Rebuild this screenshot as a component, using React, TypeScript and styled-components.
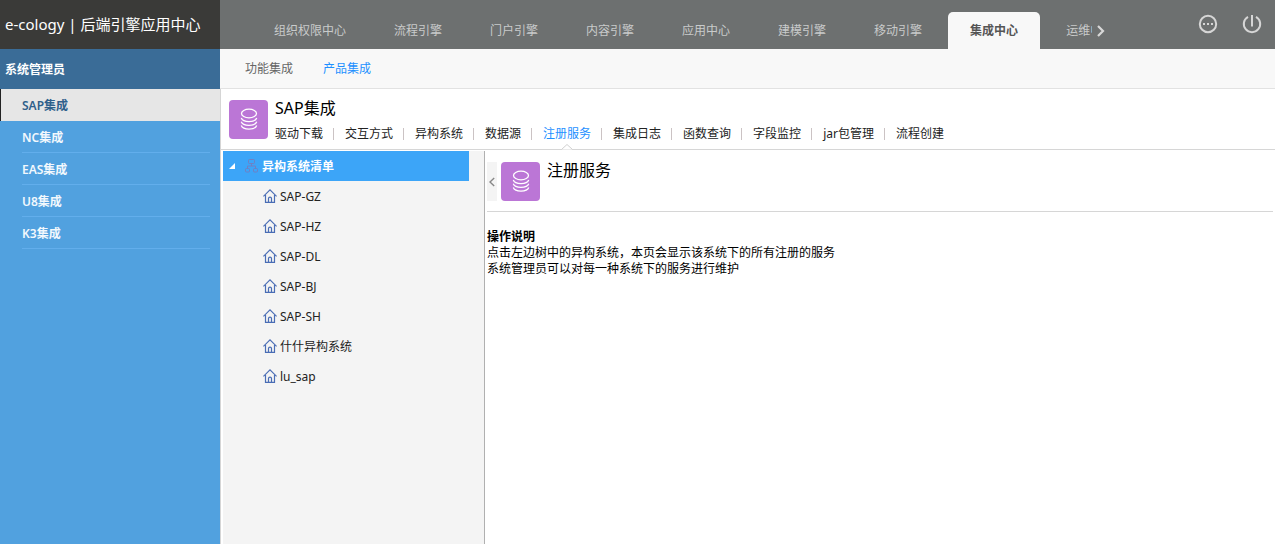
import React, { useState } from "react";
import styled, { createGlobalStyle, css } from "styled-components";

const GlobalStyle = createGlobalStyle`
  * { box-sizing: border-box; }
  body {
    margin: 0;
    background: #fff;
    color: #000;
    font: 12px/16px "Noto Sans", "Noto Sans CJK SC", sans-serif;
  }
  button {
    margin: 0;
    padding: 0;
    border: 0;
    background: none;
    color: inherit;
    font: inherit;
    cursor: pointer;
  }
  a { color: inherit; text-decoration: none; }
  ul { margin: 0; padding: 0; list-style: none; }
  h1, h2, p { margin: 0; font-weight: 400; }
  svg { display: block; flex: none; }
`;

const Page = styled.div`
  display: flex;
  min-height: 100vh;
`;

const Sidebar = styled.aside`
  flex: 0 0 220px;
  background: #51a1df;
`;

const Brand = styled.div`
  height: 49px;
  padding-left: 5px;
  background: #3a3a38;
  color: #fff;
  font-size: 15px;
  line-height: 48px;
  white-space: nowrap;
`;

const UserBar = styled.div`
  height: 40px;
  padding-left: 5px;
  background: #3a6c97;
  color: #fff;
  font-weight: 600;
  line-height: 42px;
`;

const SideLink = styled.a<{ $active: boolean }>`
  display: block;
  height: 32px;
  line-height: 34px;
  font-weight: 600;
  ${({ $active }) =>
    $active
      ? css`
          padding-left: 21px;
          border-left: 1px solid #222;
          background: #e6e6e6;
          color: #2f608b;
        `
      : css`
          margin: 0 10px 0 22px;
          border-bottom: 1px solid #62aeec;
          color: #f2f8fd;
        `}
`;

const Main = styled.main`
  display: flex;
  flex: 1;
  flex-direction: column;
  min-width: 0;
`;

const TopBar = styled.header`
  display: flex;
  justify-content: space-between;
  height: 49px;
  padding: 0 13px 0 30px;
  background: #6d7070;
  color: #c9cbcb;
`;

const TabArea = styled.div`
  display: flex;
  align-items: flex-end;
  min-width: 0;
`;

const TabList = styled.nav`
  display: flex;
  max-width: 842px;
  overflow: hidden;
`;

const Tab = styled.a<{ $active: boolean }>`
  flex: none;
  height: 37px;
  margin: 0 2px;
  padding: 0 22px;
  border-radius: 5px 5px 0 0;
  line-height: 37px;
  ${({ $active }) =>
    $active &&
    css`
      background: #f8f8f8;
      color: #555;
      font-weight: 600;
    `}
`;

const ScrollButton = styled.button`
  display: flex;
  align-items: center;
  height: 37px;
  padding-left: 4px;
`;

const Tools = styled.div`
  display: flex;
  flex: none;
  gap: 24px;
  height: 48px;
`;

const ToolButton = styled.button`
  display: flex;
  align-items: center;
`;

const SubNav = styled.nav`
  display: flex;
  gap: 30px;
  height: 40px;
  padding-left: 25px;
  border-bottom: 1px solid #e2e2e2;
  background: #f8f8f8;
  line-height: 40px;
`;

const SubLink = styled.a<{ $active: boolean }>`
  color: ${({ $active }) => ($active ? "#1e90ff" : "#666")};
`;

const Workspace = styled.div`
  display: flex;
  flex: 1;
  flex-direction: column;
  border-left: 1px solid #d5d5d5;
`;

const ModuleHeader = styled.header`
  display: flex;
  gap: 7px;
  height: 61px;
  padding: 11px 0 0 8px;
  border-bottom: 1px solid #d6d6d6;
`;

const Badge = styled.span`
  display: flex;
  flex: none;
  align-items: center;
  justify-content: center;
  width: 39px;
  height: 39px;
  border-radius: 4px;
  background: #bb76d6;
`;

const Title = styled.h1`
  font-size: 16px;
  line-height: 17px;
`;

const ModuleInfo = styled.div`
  display: flex;
  flex-direction: column;
  gap: 3px;
`;

const ModuleNav = styled.nav`
  display: flex;
  color: #222;
`;

const ModuleLink = styled.a<{ $active: boolean }>`
  position: relative;
  height: 29px;
  line-height: 28px;
  ${({ $active }) => $active && "color: #1e90ff;"}
`;

const Separator = styled.span`
  width: 1px;
  height: 12px;
  margin: 8px 11px 0 10px;
  background: #cbc3c4;
`;

const Pointer = styled.svg`
  position: absolute;
  bottom: -1px;
  left: 50%;
  margin-left: -6px;
`;

const Columns = styled.div`
  display: flex;
  flex: 1;
  padding: 1px 2px 0 2px;
`;

const TreePanel = styled.div`
  flex: 0 0 262px;
  padding-right: 15px;
  border-right: 1px solid #b0b0b0;
  background: #f4f4f4;
`;

const TreeRoot = styled.button`
  display: flex;
  align-items: center;
  width: 100%;
  height: 30px;
  padding-left: 6px;
  background: #3ca5f8;
  color: #fff;
  font-weight: 600;
  line-height: 30px;
`;

const Caret = styled.svg`
  margin-right: 10px;
`;

const TreeNode = styled.a`
  display: flex;
  gap: 3px;
  align-items: center;
  height: 30px;
  padding-left: 40px;
  color: #222;
`;

const TreeLabel = styled.span`
  padding-top: 2px;
`;

const Detail = styled.section`
  flex: 1;
  min-width: 0;
  padding: 11px 0 0 2px;
`;

const DetailHeader = styled.header`
  display: flex;
  height: 50px;
  border-bottom: 1px solid #d6d6d6;
`;

const CollapseButton = styled.button`
  display: flex;
  align-items: center;
  justify-content: center;
  width: 10px;
  height: 39px;
  margin-right: 4px;
  background: #f4f4f4;
`;

const DetailTitle = styled(Title)`
  margin-left: 7px;
`;

const Notes = styled.div`
  padding-top: 17px;
`;

const NotesTitle = styled.h2`
  font-size: 12px;
  font-weight: 700;
`;

const StackIcon = () => (
  <Badge>
    <svg width="18" height="24" viewBox="0 0 18 24" fill="none" stroke="#fff" strokeWidth="1.3">
      <ellipse cx="9" cy="5.500" rx="7.500" ry="4.300" />
      <path d="M1.300 10c.8 2.300 4 3.600 7.700 3.600s6.900-1.300 7.700-3.600M1.300 13.700c.8 2.300 4 3.600 7.700 3.600s6.900-1.300 7.700-3.600M1.300 17.500c.8 2.300 4 3.600 7.700 3.600s6.900-1.300 7.700-3.600" />
    </svg>
  </Badge>
);

const HouseIcon = () => (
  <svg width="14" height="14" viewBox="0 0 14 14" fill="none" stroke="#4a6db5" strokeWidth="1.2">
    <path d="M.4 7.400 7 .9l6.600 6.500" />
    <path d="M2.500 6v7.400h9V6M5.500 13.400V9.600c0-1 .6-1.500 1.500-1.500s1.500.5 1.500 1.500v3.800" />
  </svg>
);

const SystemsIcon = () => (
  <svg width="17" height="14" viewBox="0 0 17 14" fill="none" stroke="#6f80c4">
    <rect x="3.500" y=".5" width="6" height="4" rx="1" />
    <rect x=".5" y="9.500" width="4" height="3.500" rx="1" />
    <rect x="8.500" y="9.500" width="4" height="3.500" rx="1" />
    <path d="M6.500 4.500V7M2.500 9.500V7h8v2.500" />
  </svg>
);

const topTabs = ["组织权限中心", "流程引擎", "门户引擎", "内容引擎", "应用中心", "建模引擎", "移动引擎", "集成中心", "运维中心"];
const sideItems = ["SAP集成", "NC集成", "EAS集成", "U8集成", "K3集成"];
const moduleItems = ["驱动下载", "交互方式", "异构系统", "数据源", "注册服务", "集成日志", "函数查询", "字段监控", "jar包管理", "流程创建"];
const systems = ["SAP-GZ", "SAP-HZ", "SAP-DL", "SAP-BJ", "SAP-SH", "什什异构系统", "lu_sap"];

export default function App() {
  const [open, setOpen] = useState(true);
  const [treeVisible, setTreeVisible] = useState(true);

  return (
    <>
      <GlobalStyle />
      <Page>
        <Sidebar>
          <Brand>e-cology | 后端引擎应用中心</Brand>
          <UserBar>系统管理员</UserBar>
          <nav>
            {sideItems.map((item, i) => (
              <SideLink key={item} href="#" $active={i === 0}>
                {item}
              </SideLink>
            ))}
          </nav>
        </Sidebar>
        <Main>
          <TopBar>
            <TabArea>
              <TabList>
                {topTabs.map((tab) => (
                  <Tab key={tab} href="#" $active={tab === "集成中心"}>
                    {tab}
                  </Tab>
                ))}
              </TabList>
              <ScrollButton aria-label="更多">
                <svg width="10" height="12" viewBox="0 0 10 12" fill="none" stroke="#d8d8d8" strokeWidth="2.2">
                  <path d="m2 1 5 5-5 5" />
                </svg>
              </ScrollButton>
            </TabArea>
            <Tools>
              <ToolButton aria-label="消息">
                <svg width="20" height="20" viewBox="0 0 20 20" fill="none" stroke="#d6d6d6" strokeWidth="2">
                  <circle cx="10" cy="10" r="8.200" />
                  <path d="M5 10h2M9 10h2M13 10h2" />
                </svg>
              </ToolButton>
              <ToolButton aria-label="退出">
                <svg width="20" height="20" viewBox="0 0 20 20" fill="none" stroke="#d6d6d6" strokeWidth="2">
                  <path d="M6 2.800a8.200 8.200 0 1 0 8 0M10 1v11.500" />
                </svg>
              </ToolButton>
            </Tools>
          </TopBar>
          <SubNav>
            <SubLink href="#" $active={false}>功能集成</SubLink>
            <SubLink href="#" $active>产品集成</SubLink>
          </SubNav>
          <Workspace>
            <ModuleHeader>
              <StackIcon />
              <ModuleInfo>
                <Title>SAP集成</Title>
                <ModuleNav>
                  {moduleItems.map((item, i) => (
                    <React.Fragment key={item}>
                      {i > 0 && <Separator />}
                      <ModuleLink href="#" $active={item === "注册服务"}>
                        {item}
                        {item === "注册服务" && (
                          <Pointer width="12" height="6" viewBox="0 0 12 6" fill="#fff" stroke="#d0d0d0">
                            <path d="M.5 5.500 6 .5l5.500 5" />
                          </Pointer>
                        )}
                      </ModuleLink>
                    </React.Fragment>
                  ))}
                </ModuleNav>
              </ModuleInfo>
            </ModuleHeader>
            <Columns>
              {treeVisible && (
                <TreePanel>
                  <TreeRoot aria-expanded={open} onClick={() => setOpen(!open)}>
                    <Caret width="6" height="6" viewBox="0 0 6 6" fill="#fff">
                      <path d="M6 0v6H0z" />
                    </Caret>
                    <SystemsIcon />
                    <TreeLabel>异构系统清单</TreeLabel>
                  </TreeRoot>
                  {open && (
                    <ul>
                      {systems.map((name) => (
                        <li key={name}>
                          <TreeNode href="#">
                            <HouseIcon />
                            <TreeLabel>{name}</TreeLabel>
                          </TreeNode>
                        </li>
                      ))}
                    </ul>
                  )}
                </TreePanel>
              )}
              <Detail>
                <DetailHeader>
                  <CollapseButton aria-label="收起" onClick={() => setTreeVisible(!treeVisible)}>
                    <svg width="6" height="10" viewBox="0 0 6 10" fill="none" stroke="#888" strokeWidth="1.400">
                      <path d="M5.200 1 1 5l4.200 4" />
                    </svg>
                  </CollapseButton>
                  <StackIcon />
                  <DetailTitle as="h2">注册服务</DetailTitle>
                </DetailHeader>
                <Notes>
                  <NotesTitle>操作说明</NotesTitle>
                  <p>点击左边树中的异构系统，本页会显示该系统下的所有注册的服务</p>
                  <p>系统管理员可以对每一种系统下的服务进行维护</p>
                </Notes>
              </Detail>
            </Columns>
          </Workspace>
        </Main>
      </Page>
    </>
  );
}
